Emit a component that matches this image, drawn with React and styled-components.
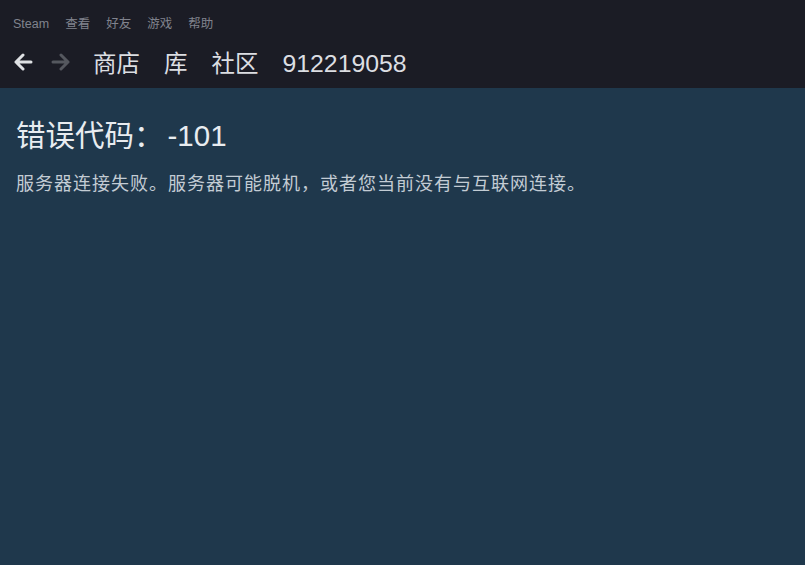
import React from "react";
import styled, { createGlobalStyle } from "styled-components";

const GlobalStyle = createGlobalStyle`
  html, body {
    margin: 0;
    padding: 0;
    background: #1f384c;
  }
  body {
    font-family: "Liberation Sans", "Noto Sans CJK SC", Arial, sans-serif;
  }
`;

const Window = styled.div`
  width: 805px;
  height: 565px;
  display: flex;
  flex-direction: column;
  background: #1f384c;
  overflow: hidden;
`;

const Header = styled.div`
  height: 88px;
  background: #1b1c25;
  display: flex;
  flex-direction: column;
  box-sizing: border-box;
  padding: 13px 0 0 13px;
`;

const MenuBar = styled.div`
  display: flex;
  gap: 16px;
  height: 18px;
  align-items: baseline;
`;

const MenuItem = styled.span`
  font-size: 12.5px;
  color: #80838d;
`;

const NavBar = styled.div`
  display: flex;
  align-items: center;
  margin-top: 13px;
  height: 36px;
`;

const Arrow = styled.div`
  width: 20px;
  height: 20px;
  margin-right: ${(p) => p.gap}px;
  display: flex;
  align-items: center;
  justify-content: center;
`;

const NavLinks = styled.div`
  display: flex;
  align-items: baseline;
  gap: 24px;
  margin-left: 2px;
`;

const NavLink = styled.span`
  font-size: ${(p) => (p.numeric ? 24.8 : 23.5)}px;
  color: #dcdee2;
`;

const Content = styled.div`
  padding: 30px 16px;
  display: flex;
  flex-direction: column;
`;

const Title = styled.h1`
  margin: 0;
  font-weight: normal;
  font-size: 29.5px;
  line-height: 36px;
  color: #e8ecf0;
`;

const Code = styled.span`
  margin-left: 4px;
`;

const Message = styled.p`
  margin: 18px 0 0;
  font-size: 18px;
  line-height: 24px;
  color: #c3ccd4;
  letter-spacing: 1px;
`;

const ArrowIcon = ({ dir, color }) => (
  <svg width="20" height="18" viewBox="0 0 20 18" fill="none">
    <g transform={dir === "right" ? "translate(20 0) scale(-1 1)" : undefined}>
      <path
        d="M18 9H3M10 2L3 9l7 7"
        stroke={color}
        strokeWidth="3"
        strokeLinecap="round"
        strokeLinejoin="round"
      />
    </g>
  </svg>
);

const App = () => {
  const menu = ["Steam", "查看", "好友", "游戏", "帮助"];
  const links = ["商店", "库", "社区"];
  return (
    <Window>
      <GlobalStyle />
      <Header>
        <MenuBar>
          {menu.map((m) => (
            <MenuItem key={m}>{m}</MenuItem>
          ))}
        </MenuBar>
        <NavBar>
          <Arrow gap={18}>
            <ArrowIcon dir="left" color="#dfe1e4" />
          </Arrow>
          <Arrow gap={20}>
            <ArrowIcon dir="right" color="#55585f" />
          </Arrow>
          <NavLinks>
            {links.map((l) => (
              <NavLink key={l}>{l}</NavLink>
            ))}
            <NavLink numeric>912219058</NavLink>
          </NavLinks>
        </NavBar>
      </Header>
      <Content>
        <Title>
          错误代码：<Code>-101</Code>
        </Title>
        <Message>服务器连接失败。服务器可能脱机，或者您当前没有与互联网连接。</Message>
      </Content>
    </Window>
  );
};

export default App;
